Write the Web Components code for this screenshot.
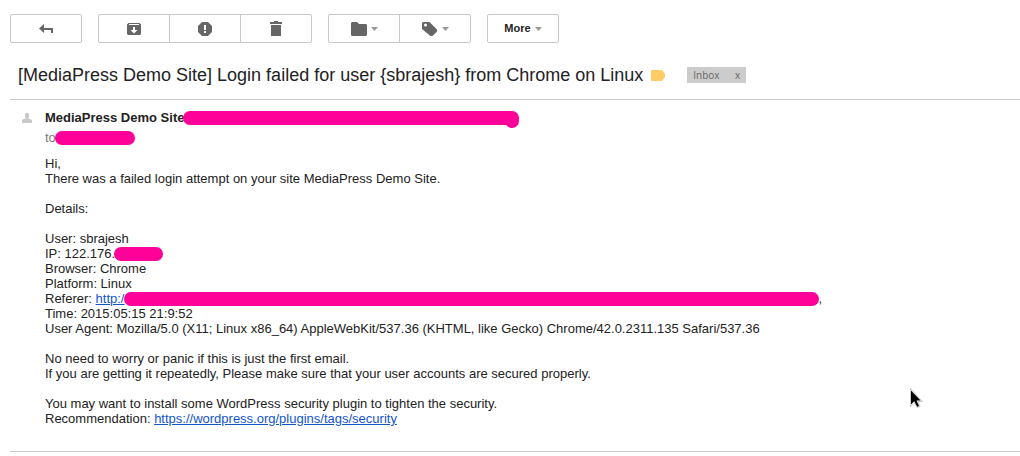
<!DOCTYPE html>
<html lang="en">
<head>
<meta charset="utf-8">
<title>Login failed for user</title>
<style>
  body { margin: 0; background: #fff; color: #222; font: 13px/15px "Liberation Sans", Arial, sans-serif; }
</style>
</head>
<body>
<mail-view></mail-view>

<template id="t-view">
  <style>
    :host { display: block; position: relative; padding: 14px 0 4px 10px; }
    nav { display: flex; gap: 16px; }
    pointer-mark { position: absolute; left: 910px; top: 388px; }
  </style>
  <nav aria-label="Message actions">
    <tool-group><tool-button icon="back" label="Back"></tool-button></tool-group>
    <tool-group>
      <tool-button icon="archive" label="Archive"></tool-button>
      <tool-button icon="spam" label="Report spam"></tool-button>
      <tool-button icon="trash" label="Delete"></tool-button>
    </tool-group>
    <tool-group>
      <tool-button icon="folder" label="Move to" menu></tool-button>
      <tool-button icon="tag" label="Labels" menu></tool-button>
    </tool-group>
    <tool-group><tool-button menu>More</tool-button></tool-group>
  </nav>
  <subject-line>[MediaPress Demo Site] Login failed for user {sbrajesh} from Chrome on Linux</subject-line>
  <mail-message></mail-message>
  <pointer-mark></pointer-mark>
</template>

<template id="t-group">
  <style>
    :host { display: flex; border: 1px solid #c8c8c8; border-radius: 2px; }
    ::slotted(:not(:first-child)) { border-left: 1px solid #c8c8c8; }
  </style>
  <slot></slot>
</template>

<template id="t-button">
  <style>
    :host { display: block; }
    button { display: flex; align-items: center; justify-content: center; gap: 4px; width: 70px; height: 27px;
      margin: 0; padding: 0; border: 0; background: none; color: #222; font: bold 11px/15px "Liberation Sans", Arial, sans-serif; }
    svg { display: block; }
  </style>
  <button type="button"><slot></slot></button>
</template>

<template id="t-subject">
  <style>
    :host { display: flex; align-items: center; height: 48px; padding: 8px 8px 0; border-bottom: 1px solid #c8c8c8; }
    h1 { margin: 0; font-weight: 400; font-size: 18px; line-height: 22px; }
    svg { margin-left: 8px; }
    .label { display: flex; justify-content: space-between; align-items: center; box-sizing: border-box; width: 59px; height: 16px;
      margin-left: 22px; padding: 0 6px; background: #ccc; color: #666; font: 10px/16px "Open Sans", sans-serif; }
    button { margin: 0; padding: 0; border: 0; background: none; color: inherit; font: inherit; }
  </style>
  <h1><slot></slot></h1>
  <svg width="14" height="11" viewBox="0 0 14 11" aria-hidden="true"><path fill="#fc6" d="M0 0h11l3 4v3l-3 4H0z"/></svg>
  <span class="label"><span>Inbox</span><button type="button" aria-label="Remove label Inbox">x</button></span>
</template>

<template id="t-message">
  <style>
    :host { display: grid; grid-template-columns: 35px 1fr; padding: 10px 0 25px; border-bottom: 1px solid #c8c8c8; }
    .avatar { margin: 3px 0 0 12px; }
    header { line-height: 16px; }
    .to { margin-top: 4px; color: #777; }
    .body { margin-top: 10px; }
    p { margin: 0 0 15px; }
    p:last-child { margin: 0; }
    a { color: #15c; }
  </style>
  <svg class="avatar" width="10" height="10" viewBox="0 0 10 10" aria-hidden="true"><path fill="#c8c8c8" d="M4 0h2l1 1v3L6 5.500l3 .8 1 1.200V10H0V7.500l1-1.200 3-.8L3 4V1z"/></svg>
  <div>
    <header>
      <div><strong>MediaPress Demo Site</strong><redacted-bar width="336" blob></redacted-bar></div>
      <div class="to">to<redacted-bar width="80"></redacted-bar></div>
    </header>
    <div class="body">
      <p>Hi,<br>There was a failed login attempt on your site MediaPress Demo Site.</p>
      <p>Details:</p>
      <p>User: sbrajesh<br>IP: 122.176.<redacted-bar width="49"></redacted-bar><br>Browser: Chrome<br>Platform: Linux<br>Referer: <a href="#">http:/</a><redacted-bar width="695"></redacted-bar>,<br>Time: 2015:05:15 21:9:52<br>User Agent: Mozilla/5.0 (X11; Linux x86_64) AppleWebKit/537.36 (KHTML, like Gecko) Chrome/42.0.2311.135 Safari/537.36</p>
      <p>No need to worry or panic if this is just the first email.<br>If you are getting it repeatedly, Please make sure that your user accounts are secured properly.</p>
      <p>You may want to install some WordPress security plugin to tighten the security.<br>Recommendation: <a href="https://wordpress.org/plugins/tags/security">https://wordpress.org/plugins/tags/security</a></p>
    </div>
  </div>
</template>

<template id="t-redacted">
  <style>
    :host { display: inline-block; position: relative; height: 14px; margin: 0 0 -4px -1px; vertical-align: 1px; border-radius: 7px; background: #f09; }
    :host([blob])::after { content: ""; position: absolute; right: 0; top: 3px; width: 14px; height: 14px; border-radius: 7px; background: #f09; }
  </style>
</template>

<template id="t-pointer">
  <style>:host { display: block; pointer-events: none; } svg { display: block; }</style>
  <svg width="13" height="21" viewBox="0 0 13 21" aria-hidden="true">
    <path d="M.5 .5v18l4-3.500 2.500 4.500 3-1-2-5h4.500z" fill="#fff" stroke="#bbb" stroke-width=".8"/>
    <path d="M1 2.500v14l3.200-3.200 3 5.500 1.800-.8-2.400-5.500h4z" fill="#000"/>
  </svg>
</template>

<script>
  const ICONS = {
    back: '<svg width="14" height="10" viewBox="0 0 14 10"><path fill="#666" d="M5 0v4h9v5h-2V6H5v3L0 4.500z"/></svg>',
    archive: '<svg width="14" height="12" viewBox="0 0 14 12"><path fill="#666" fill-rule="evenodd" d="M1.500 0h11L14 1.500V11l-1 1H1l-1-1V1.500zM2 1v1h10V1zM6 4v3H3.500L7 10.500 10.500 7H8V4z"/></svg>',
    spam: '<svg width="14" height="14" viewBox="0 0 14 14"><path fill="#666" fill-rule="evenodd" d="M4 0h6l4 4v6l-4 4H4l-4-4V4zM6 3v5h2V3zm0 6v2h2V9z"/></svg>',
    trash: '<svg width="12" height="15" viewBox="0 0 12 15"><path fill="#666" d="M4 0h4v1h4v2H0V1h4zM1 4h10v11H1z"/></svg>',
    folder: '<svg width="16" height="14" viewBox="0 0 16 14"><path fill="#666" d="M1 0h5l2 2h7l1 1v10l-1 1H1l-1-1V1z"/></svg>',
    tag: '<svg width="16" height="16" viewBox="0 0 16 16"><path fill="#666" fill-rule="evenodd" d="M1 1h6.500L15 8.500v2L10.500 15h-2L0 8V2zM3.500 2.500a1.500 1.500 0 1 0 0 3 1.500 1.500 0 0 0 0-3z"/></svg>'
  };
  const CARET = '<svg width="7" height="4" viewBox="0 0 7 4" aria-hidden="true"><path fill="#999" d="M0 0h7L3.500 4z"/></svg>';

  class Base extends HTMLElement {
    constructor() {
      super();
      this.attachShadow({ mode: 'open' }).append(document.getElementById(this.constructor.template).content.cloneNode(true));
    }
  }
  const define = (name, template) => customElements.define(name, class extends Base { static template = template; });

  customElements.define('tool-button', class extends Base {
    static template = 't-button';
    connectedCallback() {
      const button = this.shadowRoot.querySelector('button');
      if (this.hasAttribute('icon')) {
        button.setAttribute('aria-label', this.getAttribute('label'));
        button.insertAdjacentHTML('afterbegin', ICONS[this.getAttribute('icon')]);
        button.querySelector('slot').remove();
      }
      if (this.hasAttribute('menu')) {
        button.setAttribute('aria-haspopup', 'menu');
        button.insertAdjacentHTML('beforeend', CARET);
      }
    }
  });
  customElements.define('redacted-bar', class extends Base {
    static template = 't-redacted';
    connectedCallback() { this.style.width = this.getAttribute('width') + 'px'; }
  });
  define('tool-group', 't-group');
  define('subject-line', 't-subject');
  define('mail-message', 't-message');
  define('pointer-mark', 't-pointer');
  define('mail-view', 't-view');
</script>
</body>
</html>
